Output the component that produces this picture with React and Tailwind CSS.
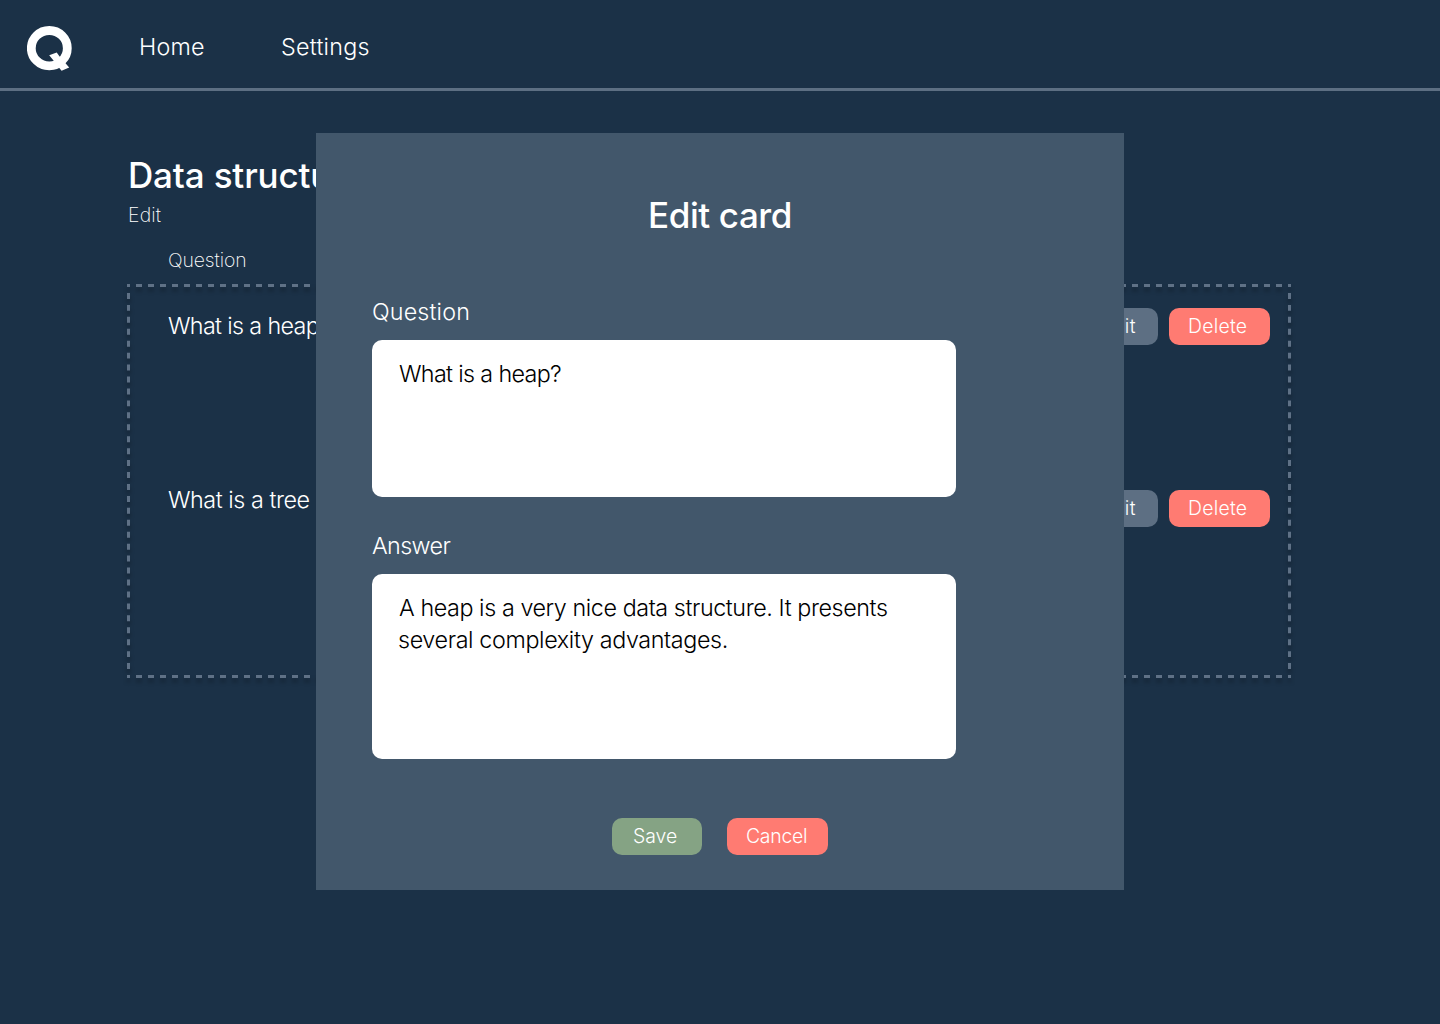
function Logo() {
  return (
    <svg className="block h-[46px] w-[46px]" viewBox="27 26 46 46" aria-label="Q">
      <ellipse cx="49.3" cy="48.2" rx="18" ry="17.7" fill="none" stroke="#fff" strokeWidth="8.8" />
      <path d="M49.2 55.2L56.7 52.4L59.6 56.6L64.6 62.2L69.2 67.6L61.6 70.8L57.6 66L53.5 60.5Z" fill="#fff" />
    </svg>
  );
}

function Button({ children, className }) {
  return (
    <button className={`flex h-[37px] items-center rounded-[10px] pb-0.5 text-[19.4px] leading-[26px] text-white ${className}`}>
      {children}
    </button>
  );
}

function DashedFrame() {
  return (
    <svg
      className="pointer-events-none absolute inset-0 h-full w-full overflow-visible drop-shadow-[0_4px_2px_rgba(0,0,0,0.3)]"
      viewBox="0 0 1164 394"
      fill="none"
      stroke="#5f7186"
      strokeWidth="3"
    >
      <path d="M0 1.5H1164M0 392.5H1164" strokeDasharray="6 6" strokeDashoffset="3" />
      <path d="M1.5 0V394M1162.5 0V394" strokeDasharray="5.97 5.97" strokeDashoffset="3" />
    </svg>
  );
}

function CardRow({ question, className, textClass }) {
  return (
    <div className={`flex items-start justify-between pr-[21px] pl-[41px] ${className}`}>
      <p className={`text-[23.3px] leading-8 whitespace-nowrap ${textClass}`}>{question}</p>
      <div className="flex gap-[11px]">
        <Button className="w-[79px] bg-[#5d6f83] pl-[22px] tracking-[0.3px]">Edit</Button>
        <Button className="w-[101px] bg-[#ff7b72] pl-[19px] tracking-[0.25px]">Delete</Button>
      </div>
    </div>
  );
}

function EditCardDialog() {
  return (
    <div role="dialog" className="absolute top-[133px] left-[316px] flex h-[757px] w-[808px] flex-col bg-[#42576b] px-14 pt-[58px]">
      <h2 className="text-center text-[35px] leading-[48px] font-[450] tracking-[-0.4px]">Edit card</h2>
      <label className="mt-[57px] text-[23.3px] leading-8 tracking-[0.15px]">Question</label>
      <div className="mt-3 h-[157px] w-[584px] rounded-[10px] bg-white px-[27px] pt-[18px] text-[23.3px] leading-8 tracking-[-0.65px] text-black">
        What is a heap?
      </div>
      <label className="mt-[33px] text-[23.3px] leading-8 tracking-[-0.6px]">Answer</label>
      <div className="mt-3 h-[185px] w-[584px] rounded-[10px] bg-white px-[27px] pt-[18px] text-[23.3px] leading-8 whitespace-nowrap text-black">
        <p className="tracking-[-0.42px]">A heap is a very nice data structure. It presents</p>
        <p className="-ml-px tracking-[-0.36px]">several complexity advantages.</p>
      </div>
      <div className="mt-[59px] flex justify-center gap-[25px]">
        <Button className="w-[90px] bg-[#85a384] pl-[21px]">Save</Button>
        <Button className="w-[101px] bg-[#ff7b72] pl-[19px] tracking-[-0.25px]">Cancel</Button>
      </div>
    </div>
  );
}

export default function App() {
  return (
    <div className="relative h-[1024px] w-[1440px] overflow-hidden bg-[#1b3147] font-['Inter',sans-serif] font-light text-white">
      <header className="flex h-[91px] items-start border-b-[3px] border-[#5d6f83] pl-[27px]">
        <div className="pt-[26px]">
          <Logo />
        </div>
        <nav className="flex pt-[31px] pl-[66px] text-[23.3px] leading-8">
          <a className="w-[142px] tracking-[0.2px]">Home</a>
          <a className="tracking-[0.25px]">Settings</a>
        </nav>
      </header>
      <main className="w-[1291px] pt-[60px] pl-[127px]">
        <h1 className="pl-px text-[35px] leading-[48px] font-[450] tracking-[-0.15px]">Data structures</h1>
        <a className="mt-[3px] block pl-px text-[19.4px] leading-[26px] font-extralight tracking-[0.2px]">Edit</a>
        <p className="mt-[19px] pl-[41px] text-[19.4px] leading-[26px] font-extralight tracking-[-0.1px]">Question</p>
        <section className="relative mt-[11px] h-[394px] pt-6">
          <DashedFrame />
          <CardRow question="What is a heap?" className="h-[182px]" textClass="pt-0.5 tracking-[-0.65px]" />
          <CardRow question="What is a tree ?" className="" textClass="-mt-1.5 tracking-[-0.45px]" />
        </section>
      </main>
      <EditCardDialog />
    </div>
  );
}
